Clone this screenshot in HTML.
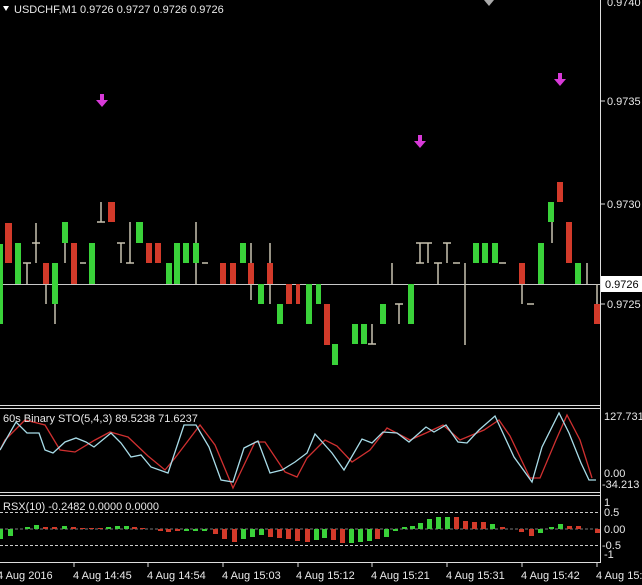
<!DOCTYPE html>
<html><head><meta charset="utf-8"><style>
html,body{margin:0;padding:0;background:#000;}
svg{display:block}
text{font-family:"Liberation Sans",sans-serif;fill:#e8e8e8;font-size:11px}
</style></head><body>
<svg width="642" height="585" viewBox="0 0 642 585" xmlns="http://www.w3.org/2000/svg">
<rect width="642" height="585" fill="#000"/>
<!-- header -->
<path d="M3 6 L9 6 L6 11 Z" fill="#fff"/>
<text x="14" y="13">USDCHF,M1  0.9726 0.9727 0.9726 0.9726</text>
<path d="M484 0 L494 0 L489 6 Z" fill="#aaa"/>
<!-- current price line -->
<line x1="0" y1="284.5" x2="600" y2="284.5" stroke="#c8c8c8" stroke-width="1"/>
<g id="wicks" stroke="#c9c2b0" stroke-width="1.5">
<line x1="36" y1="223" x2="36" y2="263"/><line x1="32" y1="243" x2="40" y2="243"/>
<line x1="27" y1="263" x2="27" y2="284"/><line x1="23" y1="263" x2="31" y2="263"/>
<line x1="101" y1="202" x2="101" y2="222"/><line x1="97" y1="222" x2="105" y2="222"/>
<line x1="121" y1="243" x2="121" y2="263"/><line x1="117" y1="243" x2="125" y2="243"/>
<line x1="130" y1="222" x2="130" y2="263"/><line x1="126" y1="263" x2="134" y2="263"/>
<line x1="80" y1="263" x2="86" y2="263"/>
<line x1="202" y1="263" x2="208" y2="263"/>
<line x1="196" y1="222" x2="196" y2="284"/>
<line x1="65" y1="243" x2="65" y2="263"/>
<line x1="55" y1="304" x2="55" y2="324"/>
<line x1="46" y1="284" x2="46" y2="304"/>
<line x1="251" y1="243" x2="251" y2="300"/>
<line x1="270" y1="243" x2="270" y2="304"/>
<line x1="552" y1="222" x2="552" y2="243"/>
<line x1="522" y1="284" x2="522" y2="304"/>
<line x1="372" y1="324" x2="372" y2="344"/><line x1="368" y1="344" x2="376" y2="344"/>
<line x1="392" y1="263" x2="392" y2="284"/>
<line x1="399" y1="304" x2="399" y2="324"/><line x1="395" y1="304" x2="403" y2="304"/>
<line x1="420" y1="243" x2="420" y2="263"/><line x1="416" y1="243" x2="424" y2="243"/><line x1="416" y1="263" x2="424" y2="263"/>
<line x1="428" y1="243" x2="428" y2="263"/><line x1="424" y1="243" x2="432" y2="243"/>
<line x1="438" y1="263" x2="438" y2="284"/><line x1="434" y1="263" x2="442" y2="263"/>
<line x1="447" y1="243" x2="447" y2="263"/><line x1="443" y1="243" x2="451" y2="243"/>
<line x1="453" y1="263" x2="460" y2="263"/>
<line x1="465" y1="263" x2="465" y2="345"/>
<line x1="499" y1="263" x2="506" y2="263"/>
<line x1="527" y1="304" x2="534" y2="304"/>
<line x1="587" y1="263" x2="587" y2="284"/>
<line x1="597" y1="284" x2="597" y2="304"/>
</g>
<g fill="#3ad23a">
<rect x="0" y="244" width="3" height="80"/>
<rect x="15" y="243" width="6" height="41"/>
<rect x="52" y="263" width="6" height="41"/>
<rect x="62" y="222" width="6" height="21"/>
<rect x="89" y="243" width="6" height="41"/>
<rect x="136" y="222" width="7" height="21"/>
<rect x="166" y="263" width="6" height="21"/>
<rect x="174" y="243" width="6" height="41"/>
<rect x="183" y="243" width="6" height="20"/>
<rect x="193" y="243" width="6" height="20"/>
<rect x="240" y="243" width="6" height="20"/>
<rect x="258" y="284" width="6" height="20"/>
<rect x="277" y="304" width="6" height="20"/>
<rect x="306" y="284" width="6" height="40"/>
<rect x="316" y="284" width="5" height="20"/>
<rect x="332" y="344" width="6" height="21"/>
<rect x="352" y="324" width="6" height="20"/>
<rect x="361" y="324" width="6" height="20"/>
<rect x="380" y="304" width="6" height="20"/>
<rect x="408" y="284" width="6" height="40"/>
<rect x="473" y="243" width="6" height="20"/>
<rect x="482" y="243" width="6" height="20"/>
<rect x="492" y="243" width="6" height="20"/>
<rect x="538" y="243" width="6" height="41"/>
<rect x="548" y="202" width="6" height="20"/>
<rect x="575" y="263" width="6" height="21"/>
</g>
<g fill="#d23a2a">
<rect x="5" y="223" width="7" height="40"/>
<rect x="43" y="263" width="6" height="21"/>
<rect x="71" y="243" width="6" height="41"/>
<rect x="108" y="202" width="7" height="20"/>
<rect x="146" y="243" width="6" height="20"/>
<rect x="155" y="243" width="6" height="20"/>
<rect x="220" y="263" width="6" height="21"/>
<rect x="230" y="263" width="6" height="21"/>
<rect x="248" y="263" width="6" height="21"/>
<rect x="267" y="263" width="6" height="21"/>
<rect x="286" y="284" width="6" height="20"/>
<rect x="296" y="284" width="4" height="20"/>
<rect x="324" y="304" width="6" height="41"/>
<rect x="519" y="263" width="6" height="21"/>
<rect x="557" y="182" width="6" height="20"/>
<rect x="566" y="222" width="6" height="41"/>
<rect x="594" y="304" width="6" height="20"/>
</g>
<!-- arrows -->
<g fill="#d83ad8">
<path d="M100 94 h4 v6 h4 l-6 7 l-6 -7 h4z"/>
<path d="M418 135 h4 v6 h4 l-6 7 l-6 -7 h4z"/>
<path d="M558 73 h4 v6 h4 l-6 7 l-6 -7 h4z"/>
</g>
<!-- axis -->
<line x1="600.5" y1="0" x2="600.5" y2="563" stroke="#ddd"/>
<g stroke="#ddd"><line x1="601" y1="101" x2="605" y2="101"/><line x1="601" y1="204" x2="605" y2="204"/><line x1="601" y1="304" x2="605" y2="304"/></g>
<text x="607" y="6">0.9740</text>
<text x="607" y="105">0.9735</text>
<text x="607" y="208">0.9730</text>
<text x="607" y="308">0.9725</text>
<rect x="601" y="276" width="41" height="16" fill="#fff"/>
<text x="605" y="288" style="fill:#000">0.9726</text>
<!-- separators -->
<g stroke="#ddd" stroke-width="1"><line x1="0" y1="405.5" x2="601" y2="405.5"/><line x1="0" y1="408.5" x2="601" y2="408.5"/><line x1="0" y1="492.5" x2="601" y2="492.5"/><line x1="0" y1="495.5" x2="601" y2="495.5"/><line x1="0" y1="562.5" x2="601" y2="562.5"/></g>
<!-- STO -->
<polyline fill="none" stroke="#d03030" stroke-width="1.3" points="0,450 5,440 25,420 45,425 60,450 75,452 95,440 110,432 128,437 148,456 165,470 175,458 200,425 215,445 233,488 255,442 265,442 285,472 297,477 307,458 325,440 337,446 352,462 370,450 387,428 410,440 426,433 443,425 460,440 484,430 499,420 510,436 530,478 540,478 556,440 567,415 580,440 592,478"/>
<polyline fill="none" stroke="#a8dce8" stroke-width="1.3" points="0,450 16,422 27,433 39,433 45,450 53,453 65,442 76,438 86,442 94,447 111,433 121,443 131,457 141,455 151,467 168,473 184,425 196,425 209,447 221,480 233,482 244,448 258,441 270,473 282,470 295,462 307,453 315,434 332,453 344,470 362,439 372,443 383,432 397,433 409,442 426,427 434,432 446,425 458,442 467,443 479,430 495,416 514,457 532,482 542,447 559,413 569,433 581,463 589,480 596,480"/>
<text x="3" y="422" font-size="10.5">60s Binary STO(5,4,3) 89.5238 71.6237</text>
<text x="604" y="420">127.731</text>
<text x="604" y="477">0.00</text>
<text x="602" y="488">-34.213</text>
<!-- RSX -->
<g stroke="#ccc" stroke-dasharray="3,2"><line x1="0" y1="512.5" x2="600" y2="512.5"/><line x1="0" y1="545.5" x2="600" y2="545.5"/></g>
<line x1="0" y1="529" x2="600" y2="529" stroke="#777" stroke-dasharray="3,2"/>
<text x="3" y="510" font-size="10.5">RSX(10) -0.2482 0.0000 0.0000</text>
<g fill="#3ad23a">
<rect x="0" y="529" width="3" height="10"/><rect x="8" y="529" width="5" height="7"/><rect x="25" y="527" width="5" height="2"/><rect x="34" y="525" width="5" height="4"/><rect x="62" y="526" width="5" height="3"/><rect x="106" y="527" width="5" height="2"/><rect x="115" y="526" width="5" height="3"/><rect x="124" y="526" width="5" height="3"/><rect x="184" y="529" width="5" height="2"/><rect x="193" y="529" width="5" height="2"/><rect x="202" y="529" width="5" height="2"/><rect x="241" y="529" width="5" height="10"/><rect x="250" y="529" width="5" height="8"/><rect x="259" y="529" width="5" height="6"/><rect x="314" y="529" width="5" height="11"/><rect x="322" y="529" width="5" height="9"/><rect x="349" y="529" width="5" height="14"/><rect x="358" y="529" width="5" height="13"/><rect x="367" y="529" width="5" height="12"/><rect x="384" y="529" width="5" height="8"/><rect x="393" y="529" width="5" height="2"/><rect x="402" y="527" width="5" height="2"/><rect x="410" y="526" width="5" height="3"/><rect x="418" y="523" width="5" height="6"/><rect x="427" y="519" width="5" height="10"/><rect x="436" y="517" width="5" height="12"/><rect x="445" y="517" width="5" height="12"/><rect x="490" y="524" width="5" height="5"/><rect x="538" y="529" width="5" height="4"/><rect x="549" y="527" width="5" height="2"/><rect x="558" y="524" width="5" height="5"/></g>
<g fill="#d23a2a">
<rect x="43" y="527" width="5" height="2"/><rect x="52" y="527" width="5" height="2"/><rect x="71" y="527" width="5" height="2"/><rect x="80" y="528" width="5" height="1"/><rect x="89" y="528" width="5" height="1"/><rect x="98" y="528" width="5" height="1"/><rect x="132" y="527" width="5" height="2"/><rect x="140" y="528" width="5" height="1"/><rect x="158" y="529" width="5" height="2"/><rect x="166" y="529" width="5" height="3"/><rect x="175" y="529" width="5" height="2"/><rect x="213" y="529" width="5" height="5"/><rect x="222" y="529" width="5" height="10"/><rect x="232" y="529" width="5" height="13"/><rect x="268" y="529" width="5" height="8"/><rect x="277" y="529" width="5" height="9"/><rect x="286" y="529" width="5" height="10"/><rect x="295" y="529" width="5" height="12"/><rect x="305" y="529" width="5" height="13"/><rect x="331" y="529" width="5" height="11"/><rect x="340" y="529" width="5" height="14"/><rect x="375" y="529" width="5" height="10"/><rect x="454" y="517" width="5" height="12"/><rect x="463" y="521" width="5" height="8"/><rect x="472" y="522" width="5" height="7"/><rect x="481" y="522" width="5" height="7"/><rect x="500" y="527" width="5" height="2"/><rect x="519" y="529" width="5" height="3"/><rect x="529" y="529" width="5" height="7"/><rect x="567" y="526" width="5" height="3"/><rect x="576" y="526" width="5" height="3"/><rect x="595" y="529" width="5" height="4"/></g>
<text x="604" y="506" font-size="10">1</text>
<text x="604" y="516" font-size="10">0.5</text>
<text x="604" y="533" font-size="10">0.00</text>
<text x="602" y="549" font-size="10">-0.5</text>
<text x="604" y="558" font-size="10">-1</text>
<!-- time axis -->
<g stroke="#ddd"><line x1="74" y1="563" x2="74" y2="567"/><line x1="148" y1="563" x2="148" y2="567"/><line x1="223" y1="563" x2="223" y2="567"/><line x1="298" y1="563" x2="298" y2="567"/><line x1="372" y1="563" x2="372" y2="567"/><line x1="447" y1="563" x2="447" y2="567"/><line x1="522" y1="563" x2="522" y2="567"/><line x1="597" y1="563" x2="597" y2="567"/></g>
<text x="-3" y="579">4 Aug 2016</text>
<text x="73" y="579">4 Aug 14:45</text>
<text x="147" y="579">4 Aug 14:54</text>
<text x="222" y="579">4 Aug 15:03</text>
<text x="296" y="579">4 Aug 15:12</text>
<text x="371" y="579">4 Aug 15:21</text>
<text x="446" y="579">4 Aug 15:31</text>
<text x="521" y="579">4 Aug 15:42</text>
<text x="596" y="579">4 Aug 15:</text>
</svg>
</body></html>
